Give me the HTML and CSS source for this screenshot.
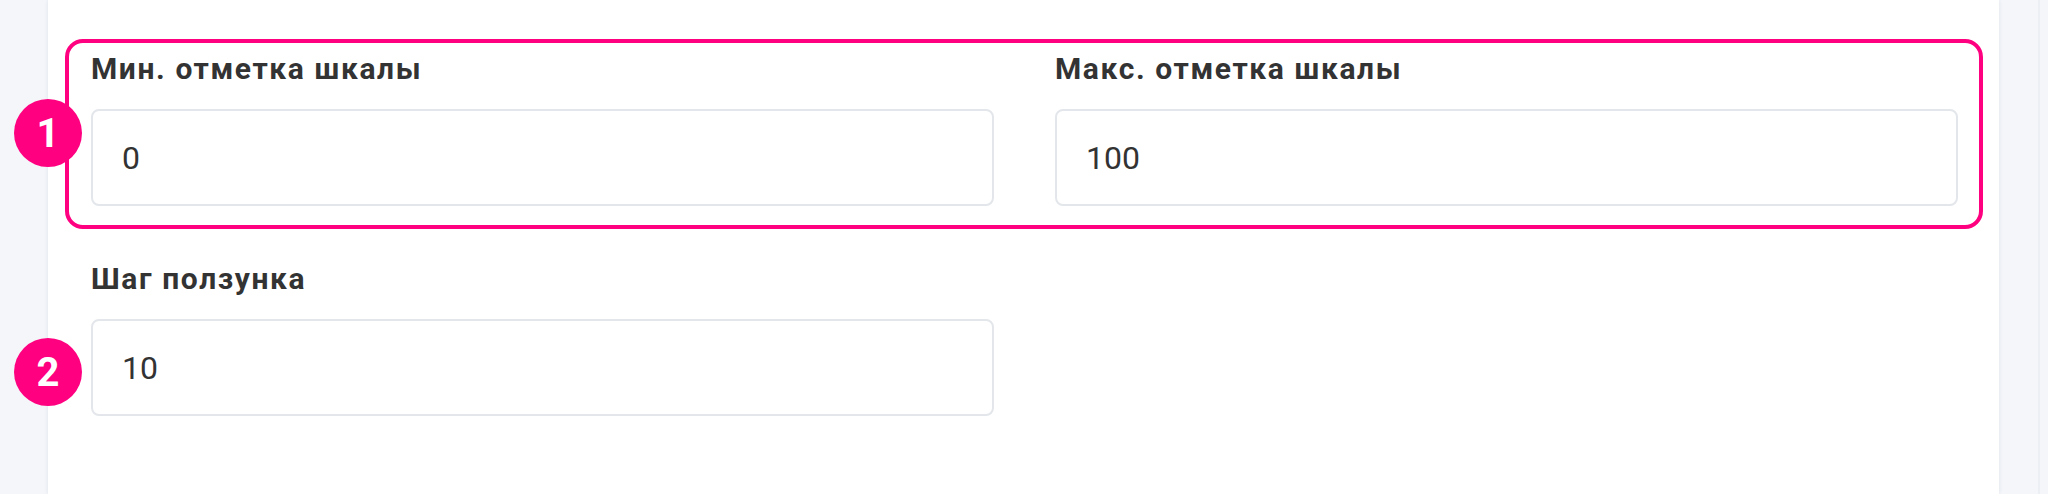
FILE: index.html
```html
<!DOCTYPE html>
<html lang="ru">
<head>
<meta charset="utf-8">
<title>Настройки шкалы</title>
<link rel="stylesheet" href="styles.css">
</head>
<body>
<div class="page">
  <main class="panel">
    <div class="group">
      <div class="field">
        <label class="label">Мин. отметка шкалы</label>
        <div class="input">0</div>
      </div>
      <div class="field">
        <label class="label">Макс. отметка шкалы</label>
        <div class="input">100</div>
      </div>
    </div>
    <div class="row">
      <div class="field">
        <label class="label">Шаг ползунка</label>
        <div class="input">10</div>
      </div>
    </div>
  </main>
  <span class="badge badge-1">1</span>
  <span class="badge badge-2">2</span>
</div>
</body>
</html>
```
FILE: styles.css
```css
html, body {
  margin: 0;
  padding: 0;
}
body {
  background: #f4f6fa;
  font-family: Roboto, "Liberation Sans", sans-serif;
  color: #333333;
}
.page {
  position: relative;
  display: flex;
  height: 494px;
  padding: 0 49px 0 48px;
  overflow: hidden;
}
.page::after {
  content: "";
  position: absolute;
  right: 8px;
  top: 0;
  bottom: 0;
  width: 2px;
  background: #eceff3;
}
.panel {
  flex: 1;
  background: #ffffff;
  padding: 39px 16px 0 17px;
  box-shadow: 0 0 4px rgba(40, 60, 90, 0.10);
}
.group {
  border: 4px solid #ff0080;
  border-radius: 18px;
  padding: 4px 21px 19px 22px;
  display: grid;
  grid-template-columns: 1fr 1fr;
  column-gap: 61px;
}
.row {
  display: grid;
  grid-template-columns: 1fr 1fr;
  column-gap: 61px;
  padding: 0 25px 0 26px;
  margin-top: 28px;
}
.field {
  display: flex;
  flex-direction: column;
}
.label {
  display: block;
  font-size: 30px;
  line-height: 44px;
  font-weight: 700;
  letter-spacing: 1.6px;
  color: #333333;
  margin-bottom: 18px;
}
.input {
  box-sizing: border-box;
  height: 97px;
  border: 2px solid #e3e6ea;
  border-radius: 8px;
  padding: 0 29px;
  display: flex;
  align-items: center;
  font-size: 32px;
  color: #333333;
  background: #ffffff;
}
.badge {
  position: absolute;
  left: 14px;
  width: 68px;
  height: 68px;
  border-radius: 50%;
  background: #ff0080;
  color: #ffffff;
  font-size: 40px;
  font-weight: 700;
  display: flex;
  align-items: center;
  justify-content: center;
}
.badge-1 { top: 99px; }
.badge-2 { top: 338px; }
```
